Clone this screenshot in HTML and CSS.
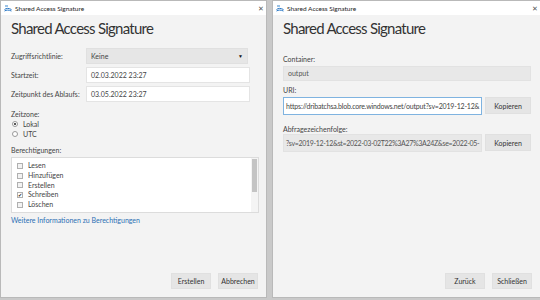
FILE: index.html
```html
<!DOCTYPE html>
<html lang="de">
<head>
    <meta charset="UTF-8">
    <title>Shared Access Signature</title>
    <link rel="stylesheet" href="styles.css">
</head>
<body>
    <div class="desktop">
        <!-- Dialog 1: SAS erstellen -->
        <div class="window">
            <div class="titlebar">
                <svg class="app-icon" width="8" height="8" viewBox="0 0 8 8">
                    <path d="M1 1h3v2H1z" fill="#9cc3e6"/>
                    <path d="M0.5 5.5c2 -1.5 4 -1.5 7 0M0.5 7c2 -1.2 4 -1.2 7 0" stroke="#2b78c6" stroke-width="1" fill="none"/>
                </svg>
                <span class="title">Shared Access Signature</span>
                <span class="close">&#x2715;</span>
            </div>
            <div class="content">
                <h1>Shared Access Signature</h1>

                <div class="form-grid">
                    <label>Zugriffsrichtlinie:</label>
                    <div class="field select">Keine<span class="arrow">&#9660;</span></div>
                    <label>Startzeit:</label>
                    <div class="field">02.03.2022 23:27</div>
                    <label>Zeitpunkt des Ablaufs:</label>
                    <div class="field">03.05.2022 23:27</div>
                </div>

                <div class="section-label">Zeitzone:</div>
                <div class="radio-row"><span class="radio checked"></span>Lokal</div>
                <div class="radio-row"><span class="radio"></span>UTC</div>

                <div class="section-label perms-label">Berechtigungen:</div>
                <div class="listbox">
                    <div class="items">
                        <div class="check-row"><span class="checkbox"></span>Lesen</div>
                        <div class="check-row"><span class="checkbox"></span>Hinzufügen</div>
                        <div class="check-row"><span class="checkbox"></span>Erstellen</div>
                        <div class="check-row"><span class="checkbox checked">&#10004;</span>Schreiben</div>
                        <div class="check-row"><span class="checkbox"></span>Löschen</div>
                    </div>
                    <div class="scrollbar"><div class="thumb"></div></div>
                </div>
                <a class="link" href="#">Weitere Informationen zu Berechtigungen</a>

                <div class="actions">
                    <button>Erstellen</button>
                    <button>Abbrechen</button>
                </div>
            </div>
        </div>

        <!-- Dialog 2: Ergebnis -->
        <div class="window">
            <div class="titlebar">
                <svg class="app-icon" width="8" height="8" viewBox="0 0 8 8">
                    <path d="M1 1h3v2H1z" fill="#9cc3e6"/>
                    <path d="M0.5 5.5c2 -1.5 4 -1.5 7 0M0.5 7c2 -1.2 4 -1.2 7 0" stroke="#2b78c6" stroke-width="1" fill="none"/>
                </svg>
                <span class="title">Shared Access Signature</span>
                <span class="close">&#x2715;</span>
            </div>
            <div class="content">
                <h1>Shared Access Signature</h1>

                <div class="stack-label first">Container:</div>
                <div class="field readonly wide">output</div>

                <div class="stack-label uri-label">URI:</div>
                <div class="copy-row">
                    <div class="field focused">https://dribatchsa.blob.core.windows.net/output?sv=2019-12-12&amp;</div>
                    <button>Kopieren</button>
                </div>

                <div class="stack-label query-label">Abfragezeichenfolge:</div>
                <div class="copy-row">
                    <div class="field readonly query">?sv=2019-12-12&amp;st=2022-03-02T22%3A27%3A24Z&amp;se=2022-05-</div>
                    <button>Kopieren</button>
                </div>

                <div class="actions">
                    <button>Zurück</button>
                    <button>Schließen</button>
                </div>
            </div>
        </div>
    </div>
</body>
</html>
```

FILE: styles.css
```css
* {
    margin: 0;
    padding: 0;
    box-sizing: border-box;
}

body {
    background: #c9c9c9;
    font-family: 'Lato', 'Open Sans', sans-serif;
    color: #333;
    width: 540px;
    height: 300px;
    overflow: hidden;
}

.desktop {
    display: flex;
    justify-content: space-between;
    height: 298px;
}

.window {
    width: 267px;
    height: 298px;
    background: #f3f3f3;
    border: 1px solid #b9b9b9;
    display: flex;
    flex-direction: column;
}

.window + .window {
    width: 268px;
    border-right: none;
}

.titlebar {
    height: 14px;
    background: #fff;
    display: flex;
    align-items: center;
    padding: 0 2px 0 3px;
    font-size: 6.5px;
    color: #222;
    flex-shrink: 0;
}

.app-icon {
    margin-right: 3px;
}

.title {
    flex: 1;
}

.close {
    font-size: 7px;
    color: #555;
}

.content {
    flex: 1;
    display: flex;
    flex-direction: column;
    padding: 0 8px 0 10px;
    font-size: 7px;
    line-height: 10px;
    color: #3a3a3a;
}

h1 {
    font-size: 15px;
    font-weight: 400;
    letter-spacing: -0.75px;
    line-height: 20px;
    color: #333;
    margin: 3px 0 10px;
}

.form-grid {
    display: grid;
    grid-template-columns: 75px 164px;
    row-gap: 3px;
    align-items: center;
}

.form-grid label {
    color: #444;
}

.field {
    height: 16px;
    line-height: 14px;
    padding: 0 4px;
    background: #fff;
    border: 1px solid #e4e4e4;
    color: #444;
    white-space: nowrap;
    overflow: hidden;
}

.select {
    position: relative;
    background: #e6e6e6;
    border-color: #e0e0e0;
    margin-right: 2px;
}

.arrow {
    position: absolute;
    right: 4px;
    top: 0;
    font-size: 5px;
    color: #111;
}

.section-label {
    margin-top: 7px;
    color: #444;
}

.radio-row,
.check-row {
    display: flex;
    align-items: center;
    color: #444;
}

.radio {
    width: 6px;
    height: 6px;
    border: 1px solid #9a9a9a;
    border-radius: 50%;
    background: #fff;
    margin: 0 5px 0 1px;
    position: relative;
}

.radio.checked::after {
    content: '';
    position: absolute;
    left: 1px;
    top: 1px;
    width: 2px;
    height: 2px;
    border-radius: 50%;
    background: #222;
}

.perms-label {
    margin-top: 6px;
    margin-bottom: 2px;
}

.listbox {
    height: 56px;
    background: #fff;
    border: 1px solid #dcdcdc;
    display: flex;
    margin-right: -1px;
}

.items {
    flex: 1;
    padding: 3px 0 0 5px;
    line-height: 9.8px;
}

.checkbox {
    width: 6px;
    height: 6px;
    border: 1px solid #b0b0b0;
    background: #f2f2f2;
    margin-right: 5px;
    font-size: 5px;
    line-height: 4px;
    color: #222;
    text-align: center;
}

.checkbox.checked {
    background: #fff;
}

.scrollbar {
    width: 7px;
    padding: 1px;
    background: #f4f4f4;
}

.thumb {
    height: 33px;
    background: #c4c4c4;
}

.link {
    color: #2a6fb3;
    text-decoration: none;
    margin-top: 2px;
}

.actions {
    margin-top: auto;
    margin-bottom: 8px;
    display: flex;
    justify-content: flex-end;
    gap: 7px;
}

button {
    font-family: inherit;
    font-size: 7px;
    width: 40px;
    height: 16px;
    background: #e5e5e5;
    border: 1px solid #e0e0e0;
    color: #333;
}

.stack-label {
    margin-bottom: 2px;
    color: #444;
}

.stack-label.first {
    margin-top: 6px;
}

.uri-label {
    margin-top: 4px;
}

.query-label {
    margin-top: 9px;
    margin-bottom: 0;
}

.readonly {
    background: #e8e8e8;
    border-color: #e2e2e2;
    color: #555;
}

.wide {
    width: 248px;
    height: 15px;
    line-height: 13px;
}

.copy-row {
    display: flex;
    gap: 3px;
    width: 248px;
}

.copy-row .field {
    flex: 1;
    height: 18px;
    line-height: 16px;
    padding: 0 2px;
    letter-spacing: -0.18px;
}

.copy-row .query {
    letter-spacing: -0.32px;
}

.copy-row button {
    width: 46px;
    height: 17px;
}

.focused {
    border-color: #7fb3e0;
}
```
